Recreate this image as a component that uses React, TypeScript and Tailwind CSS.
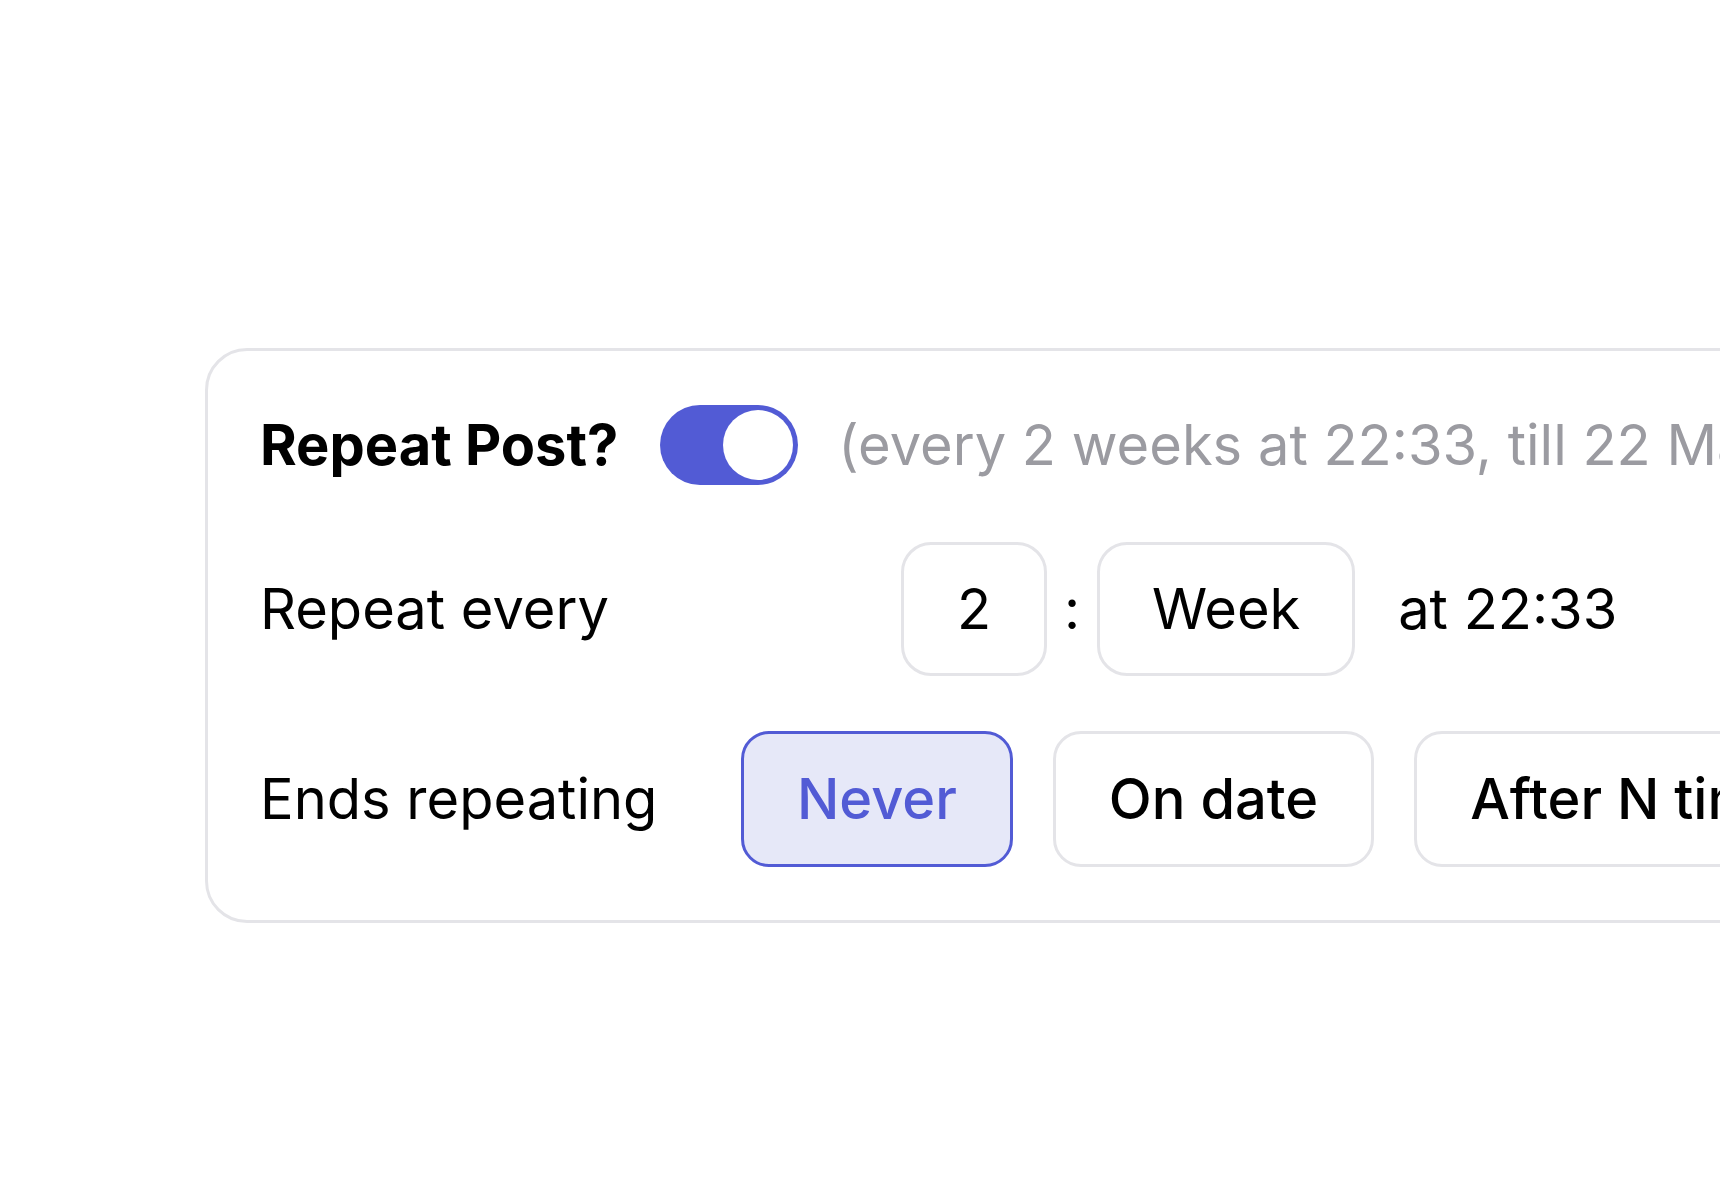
import React from "react";

const Toggle = ({ on }: { on: boolean }) => (
  <div
    className={`flex h-[80px] w-[138px] shrink-0 items-center rounded-full p-[5px] ${
      on ? "justify-end bg-[#525bd5]" : "justify-start bg-[#e4e4e8]"
    }`}
  >
    <span className="block h-[70px] w-[70px] rounded-full bg-white" />
  </div>
);

const options = ["Never", "On date", "After N times"];

const App = () => {
  const selected = "Never";

  return (
    <div className="h-[1200px] w-full overflow-hidden bg-white pl-[205px] pt-[348px] font-[Inter,sans-serif] text-[56px] text-black">
      <div className="flex w-[1600px] flex-col gap-[55px] rounded-[42px] border-[3px] border-[#e4e4e8] px-[52px] pt-[52px] pb-[53px] whitespace-nowrap">
        {/* toggle row */}
        <div className="flex items-center">
          <span className="font-bold">Repeat Post?</span>
          <div className="ml-[42px]">
            <Toggle on />
          </div>
          <span className="ml-[40px] text-[#9b9ba1]">
            (every 2 weeks at 22:33, till 22 May 2025)
          </span>
        </div>

        {/* interval row */}
        <div className="flex items-center">
          <span className="w-[641px] shrink-0">Repeat every</span>
          <div className="flex h-[134px] w-[146px] items-center justify-center rounded-[30px] border-[3px] border-[#e4e4e8]">
            2
          </div>
          <span className="mx-[17px]">:</span>
          <div className="flex h-[134px] w-[258px] items-center justify-center rounded-[30px] border-[3px] border-[#e4e4e8]">
            Week
          </div>
          <span className="ml-[43px]">at 22:33</span>
        </div>

        {/* end row */}
        <div className="flex items-center">
          <span className="w-[481px] shrink-0">Ends repeating</span>
          <div className="flex gap-[40px]">
            {options.map((opt) => (
              <button
                key={opt}
                className={`flex h-[136px] items-center rounded-[28px] border-[3px] px-[53px] font-medium ${
                  opt === selected
                    ? "border-[#525bd5] bg-[#e6e8f8] text-[#525bd5]"
                    : "border-[#e4e4e8] bg-white text-black"
                }`}
              >
                {opt}
              </button>
            ))}
          </div>
        </div>
      </div>
    </div>
  );
};

export default App;
